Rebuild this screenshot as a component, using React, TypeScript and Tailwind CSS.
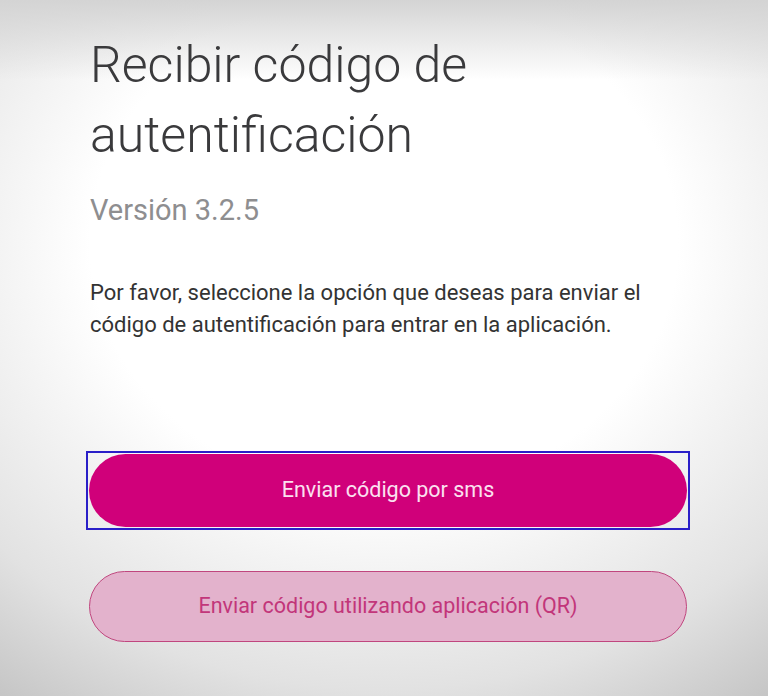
export default function App() {
  return (
    <div className="min-h-screen w-full bg-[linear-gradient(to_bottom,#d4d4d4_0px,rgba(255,255,255,0)_80px),radial-gradient(ellipse_85%_80%_at_50%_35%,#ffffff_45%,#e2e2e2_80%,#c6c6c6_100%)] font-['Roboto',sans-serif]">
      <div className="pl-[89px] pr-[81px] pt-[30px]">
        {/* Encabezado */}
        <h1 className="pl-[1px] text-[50px] leading-[70px] font-light text-[#3a3a3c]">
          Recibir código de
          <br />
          autentificación
        </h1>
        <p className="mt-[22px] pl-[1px] text-[29px] leading-[36px] text-[#8e8e90]">
          Versión 3.2.5
        </p>
        <p className="mt-[49px] pl-[1px] text-[22px] leading-[32px] text-[#333333]">
          Por favor, seleccione la opción que deseas para enviar el
          <br />
          código de autentificación para entrar en la aplicación.
        </p>

        {/* Opciones */}
        <div className="mt-[110px] -mx-[3px] border-2 border-[#2a1fc8] p-[1px]">
          <button className="flex h-[73px] w-full items-center justify-center rounded-full bg-[#d0007a] text-[21.5px] text-[#fbe0f0]">
            Enviar código por sms
          </button>
        </div>
        <button className="mt-[41px] flex h-[71px] w-full items-center justify-center rounded-full border border-[#c0467e] bg-[#e3b2cc] text-[21.5px] text-[#c2367a]">
          Enviar código utilizando aplicación (QR)
        </button>
      </div>
    </div>
  );
}
